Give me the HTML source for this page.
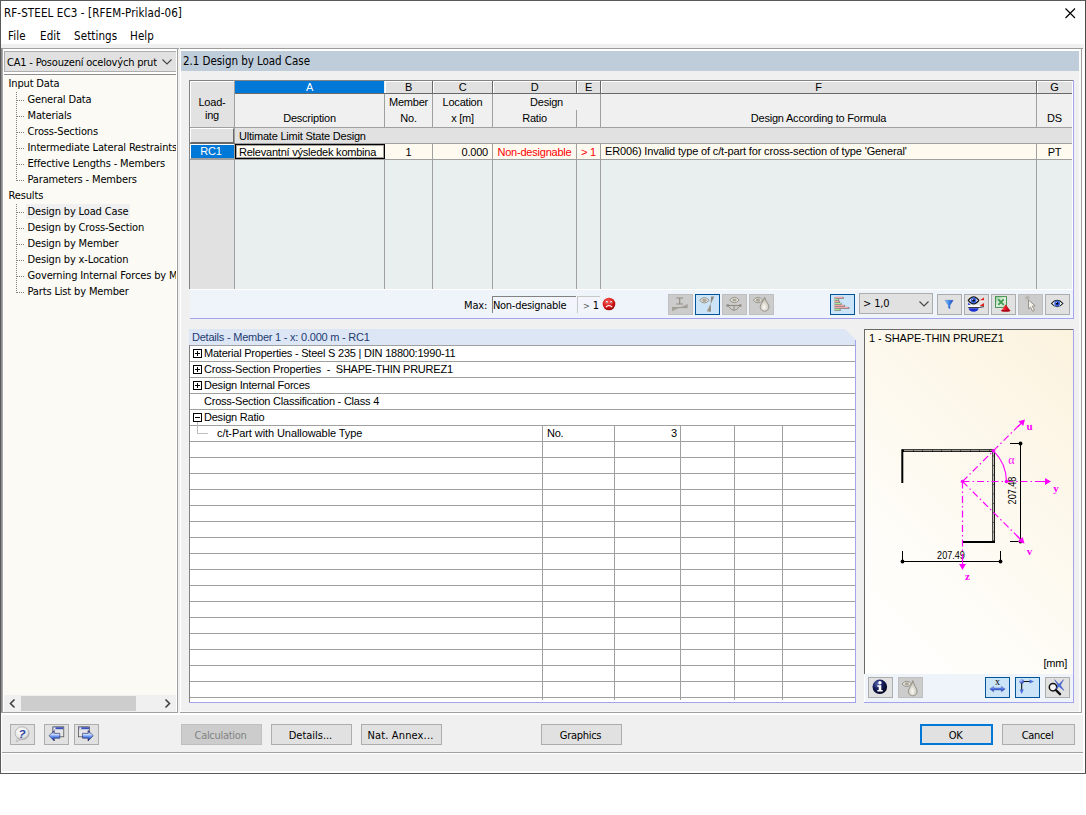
<!DOCTYPE html>
<html><head><meta charset="utf-8"><title>RF-STEEL EC3</title>
<style>
*{box-sizing:border-box;margin:0;padding:0}
html,body{width:1086px;height:815px;overflow:hidden;background:#fff}
body{position:relative;font-family:"Liberation Sans","DejaVu Sans",sans-serif;font-size:11px;color:#000}
.abs,.abs>*{position:absolute}
#win{position:absolute;left:0;top:0;width:1086px;height:774px;background:#f0f0f0;overflow:hidden}
.ui{font-family:"DejaVu Sans Condensed","Liberation Sans",sans-serif;font-size:11.5px;letter-spacing:0.1px;white-space:nowrap}
.tree{font-family:"DejaVu Sans Condensed","Liberation Sans",sans-serif;font-size:11px;letter-spacing:-0.15px}
.th{font-family:"Liberation Sans",sans-serif;font-size:11px;white-space:nowrap;letter-spacing:-0.22px}
.t{position:absolute;white-space:nowrap;line-height:14px}
.c{text-align:center}
.r{text-align:right}
.btn{position:absolute;height:21px;background:#e1e1e1;border:1px solid #adadad;text-align:center;line-height:19px;padding-top:1px;padding-right:2px;white-space:nowrap;letter-spacing:-0.3px}
.ib{position:absolute;width:25px;height:21px;background:#e1e1e1;border:1px solid #adadad}
.ib.on{background:#cce4f7;border-color:#005499}
.ib.dis{background:#cccccc;border-color:#bfbfbf}
.ib svg{position:absolute;left:0;top:0}
</style></head>
<body>
<div id="win">
<!-- titlebar + menu -->
<div class="abs" id="top" style="left:0;top:0;width:1086px;height:44px;background:#fff">
  <div class="t ui" style="left:4px;top:6px">RF-STEEL EC3 - [RFEM-Priklad-06]</div>
  <div class="t ui" style="left:8px;top:29px">File</div>
  <div class="t ui" style="left:40px;top:29px">Edit</div>
  <div class="t ui" style="left:74px;top:29px">Settings</div>
  <div class="t ui" style="left:130px;top:29px">Help</div>
  <svg style="left:1064px;top:7px" width="14" height="14" viewBox="0 0 14 14"><path d="M1.500 1.500L11 11M11 1.500L1.500 11" stroke="#000" stroke-width="1.150" fill="none"/></svg>
</div>
<!-- left panel -->
<div class="abs" id="left" style="left:1px;top:48px;width:178px;height:665px">
  <div style="left:0;top:0;width:178px;height:1px;background:#a0a0a0"></div>
  <div style="left:0;top:0;width:1px;height:665px;background:#8c8c8c"></div>
  <div style="left:1px;top:1px;width:1px;height:664px;background:#a8a8a8"></div>
  <div style="left:2px;top:1px;width:174px;height:663px;background:#fff"></div>
  <div style="left:176px;top:1px;width:1px;height:664px;background:#a0a0a0"></div>
  <div style="left:0;top:664px;width:177px;height:1px;background:#a0a0a0"></div>
  <!-- combo -->
  <div style="left:3px;top:3px;width:172px;height:21px;background:#e1e1e1;border:1px solid #adadad;border-right:none"></div>
  <div class="t tree" style="left:6px;top:8px;width:150px;overflow:hidden;letter-spacing:-0.2px">CA1 - Posouzení ocelových prutů</div>
  <svg style="left:160px;top:10px" width="12" height="8" viewBox="0 0 12 8"><path d="M1.5 1.5L6 6L10.5 1.5" stroke="#444" stroke-width="1.1" fill="none"/></svg>
  <!-- tree -->
  <div id="tree" style="left:3px;top:26px;width:172px;height:638px;background:#fbfaf4;border-top:1px solid #8e8e8e;padding-left:1px;overflow:hidden">
    <div style="position:absolute;left:22px;top:129px;width:104px;height:15px;background:#f0f0f0"></div>
    <div class="t tree" style="left:4.5px;top:2px">Input Data</div>
    <div class="t tree" style="left:23.5px;top:18px">General Data</div>
    <div class="t tree" style="left:23.5px;top:34px">Materials</div>
    <div class="t tree" style="left:23.5px;top:50px">Cross-Sections</div>
    <div class="t tree" style="left:23.5px;top:66px">Intermediate Lateral Restraints</div>
    <div class="t tree" style="left:23.5px;top:82px">Effective Lengths - Members</div>
    <div class="t tree" style="left:23.5px;top:98px">Parameters - Members</div>
    <div class="t tree" style="left:4.5px;top:114px">Results</div>
    <div class="t tree" style="left:23.5px;top:130px">Design by Load Case</div>
    <div class="t tree" style="left:23.5px;top:146px">Design by Cross-Section</div>
    <div class="t tree" style="left:23.5px;top:162px">Design by Member</div>
    <div class="t tree" style="left:23.5px;top:178px">Design by x-Location</div>
    <div class="t tree" style="left:23.5px;top:194px">Governing Internal Forces by Member</div>
    <div class="t tree" style="left:23.5px;top:210px">Parts List by Member</div>
    <!-- dotted connectors -->
    <svg style="position:absolute;left:0;top:0" width="30" height="230" viewBox="0 0 30 230">
      <g stroke="#808080" stroke-width="1" stroke-dasharray="1 1" fill="none" shape-rendering="crispEdges">
        <path d="M12.5 17V105.5"/><path d="M12.5 129V217.5"/>
        <path d="M13 25.5H21"/><path d="M13 41.5H21"/><path d="M13 57.5H21"/><path d="M13 73.5H21"/><path d="M13 89.5H21"/><path d="M13 105.5H21"/>
        <path d="M13 137.5H21"/><path d="M13 153.5H21"/><path d="M13 169.5H21"/><path d="M13 185.5H21"/><path d="M13 201.5H21"/><path d="M13 217.5H21"/>
      </g>
    </svg>
    <!-- scrollbar -->
    <div style="position:absolute;left:0;top:620px;width:172px;height:17px;background:#f0f0f0"></div>
    <div style="position:absolute;left:17px;top:621px;width:115px;height:15px;background:#cdcdcd"></div>
    <svg style="position:absolute;left:0;top:620px" width="172" height="17" viewBox="0 0 172 17"><path d="M10.5 4.5L6.5 8.5L10.5 12.5M161.500 4.5L165.5 8.5L161.5 12.5" stroke="#404040" stroke-width="1.6" fill="none"/></svg>
  </div>
</div>
<!--LEFT_END-->
<!--RIGHT_START--><!-- right panel -->
<div class="abs" id="right" style="left:180px;top:48px;width:905px;height:667px">
<div style="left:0px;top:0px;width:903px;height:1px;background:#9c9c9c"></div>
<div style="left:0px;top:1px;width:901px;height:2px;background:#fff"></div>
<div style="left:0px;top:1px;width:1px;height:664px;background:#fff"></div>
<div style="left:899px;top:3px;width:1px;height:660px;background:#fafafa"></div>
<div style="left:900px;top:1px;width:1px;height:663px;background:#f8f8f8"></div>
<div style="left:901px;top:1px;width:1px;height:664px;background:#a0a0a0"></div>
<div style="left:1px;top:663px;width:900px;height:1px;background:#f8f8f8"></div>
<div style="left:0px;top:664px;width:902px;height:1px;background:#a0a0a0"></div>
<div style="left:1px;top:3px;width:898px;height:20px;background:#bfcddb"></div>
<div class="t ui" style="left:3px;top:6px;letter-spacing:-0.05px">2.1 Design by Load Case</div>
<div style="left:9px;top:32px;width:884px;height:209px;background:#e9efef;border-left:1px solid #828282;border-top:1px solid #828282"></div>
<div style="left:10px;top:33px;width:44px;height:46px;background:#e2e2e2;border-left:1px solid #fff;border-top:1px solid #fff"></div>
<div style="left:10px;top:79px;width:44px;height:162px;background:#e1e1e1"></div>
<div style="left:55px;top:46px;width:838px;height:33px;background:#f0f0f0"></div>
<div style="left:55px;top:33px;width:149px;height:12px;background:#0078d7"></div>
<div style="left:55px;top:45px;width:150px;height:1px;background:#696969"></div>
<div class="t th" style="left:55px;top:32px;width:149px;text-align:center;color:#fff">A</div>
<div style="left:205px;top:33px;width:47px;height:12px;background:#e1e1e1;border-left:1px solid #fff;border-top:1px solid #fff"></div>
<div style="left:205px;top:45px;width:48px;height:1px;background:#696969"></div>
<div style="left:252px;top:33px;width:1px;height:13px;background:#696969"></div>
<div class="t th" style="left:205px;top:32px;width:47px;text-align:center;">B</div>
<div style="left:253px;top:33px;width:59px;height:12px;background:#e1e1e1;border-left:1px solid #fff;border-top:1px solid #fff"></div>
<div style="left:253px;top:45px;width:60px;height:1px;background:#696969"></div>
<div style="left:312px;top:33px;width:1px;height:13px;background:#696969"></div>
<div class="t th" style="left:253px;top:32px;width:59px;text-align:center;">C</div>
<div style="left:313px;top:33px;width:83px;height:12px;background:#e1e1e1;border-left:1px solid #fff;border-top:1px solid #fff"></div>
<div style="left:313px;top:45px;width:84px;height:1px;background:#696969"></div>
<div style="left:396px;top:33px;width:1px;height:13px;background:#696969"></div>
<div class="t th" style="left:313px;top:32px;width:83px;text-align:center;">D</div>
<div style="left:397px;top:33px;width:23px;height:12px;background:#e1e1e1;border-left:1px solid #fff;border-top:1px solid #fff"></div>
<div style="left:397px;top:45px;width:24px;height:1px;background:#696969"></div>
<div style="left:420px;top:33px;width:1px;height:13px;background:#696969"></div>
<div class="t th" style="left:397px;top:32px;width:23px;text-align:center;">E</div>
<div style="left:421px;top:33px;width:435px;height:12px;background:#e1e1e1;border-left:1px solid #fff;border-top:1px solid #fff"></div>
<div style="left:421px;top:45px;width:436px;height:1px;background:#696969"></div>
<div style="left:856px;top:33px;width:1px;height:13px;background:#696969"></div>
<div class="t th" style="left:421px;top:32px;width:435px;text-align:center;">F</div>
<div style="left:857px;top:33px;width:35px;height:12px;background:#e1e1e1;border-left:1px solid #fff;border-top:1px solid #fff"></div>
<div style="left:857px;top:45px;width:36px;height:1px;background:#696969"></div>
<div style="left:892px;top:33px;width:1px;height:13px;background:#696969"></div>
<div class="t th" style="left:857px;top:32px;width:35px;text-align:center;">G</div>
<div style="left:10px;top:79px;width:883px;height:1px;background:#a0a0a0"></div>
<div style="left:54px;top:32px;width:1px;height:209px;background:#a0a0a0"></div>
<div style="left:204px;top:46px;width:1px;height:195px;background:#a0a0a0"></div>
<div style="left:252px;top:46px;width:1px;height:195px;background:#a0a0a0"></div>
<div style="left:312px;top:46px;width:1px;height:195px;background:#a0a0a0"></div>
<div style="left:396px;top:62px;width:1px;height:179px;background:#a0a0a0"></div>
<div style="left:420px;top:46px;width:1px;height:195px;background:#a0a0a0"></div>
<div style="left:856px;top:46px;width:1px;height:195px;background:#a0a0a0"></div>
<div style="left:892px;top:46px;width:1px;height:195px;background:#a0a0a0"></div>
<div style="left:55px;top:80px;width:838px;height:15px;background:#e1e1e1"></div>
<div style="left:10px;top:95px;width:883px;height:1px;background:#a0a0a0"></div>
<div style="left:10px;top:95px;width:45px;height:1px;background:#696969"></div>
<div style="left:10px;top:80px;width:44px;height:15px;background:#e1e1e1;border-left:1px solid #fff;border-top:1px solid #fff;border-bottom:1px solid #696969;border-right:1px solid #696969"></div>
<div style="left:55px;top:96px;width:838px;height:15px;background:#fffaf0"></div>
<div style="left:10px;top:111px;width:883px;height:1px;background:#a0a0a0"></div>
<div style="left:10px;top:96px;width:44px;height:15px;background:#0078d7;border-left:1px solid #fff;border-top:1px solid #fff;border-bottom:1px solid #a0a0a0"></div>
<div style="left:204px;top:96px;width:1px;height:15px;background:#a0a0a0"></div>
<div style="left:252px;top:96px;width:1px;height:15px;background:#a0a0a0"></div>
<div style="left:312px;top:96px;width:1px;height:15px;background:#a0a0a0"></div>
<div style="left:396px;top:96px;width:1px;height:15px;background:#a0a0a0"></div>
<div style="left:420px;top:96px;width:1px;height:15px;background:#a0a0a0"></div>
<div style="left:856px;top:96px;width:1px;height:15px;background:#a0a0a0"></div>
<div style="left:892px;top:96px;width:1px;height:15px;background:#a0a0a0"></div>
<div style="left:55px;top:96px;width:150px;height:15px;border:1px solid #000;background:#fffcf4;box-shadow:inset 0 0 0 1px rgba(0,0,0,0.35)"></div>
<div class="t th" style="left:10px;top:48px;width:44px;text-align:center;line-height:13px">Load-<br>ing</div>
<div class="t th" style="left:55px;top:63px;width:149px;text-align:center;">Description</div>
<div class="t th" style="left:205px;top:46px;width:47px;text-align:center;line-height:16px">Member<br>No.</div>
<div class="t th" style="left:253px;top:46px;width:59px;text-align:center;line-height:16px">Location<br>x [m]</div>
<div class="t th" style="left:313px;top:47px;width:107px;text-align:center;">Design</div>
<div class="t th" style="left:313px;top:63px;width:83px;text-align:center;">Ratio</div>
<div class="t th" style="left:421px;top:63px;width:435px;text-align:center;">Design According to Formula</div>
<div class="t th" style="left:857px;top:63px;width:35px;text-align:center;">DS</div>
<div class="t th" style="left:59px;top:81px;">Ultimate Limit State Design</div>
<div class="t th" style="left:9px;top:96px;width:44px;text-align:center;color:#fff">RC1</div>
<div class="t th" style="left:59px;top:97px;width:143px;overflow:hidden">Relevantní výsledek kombina</div>
<div class="t th" style="left:205px;top:97px;width:47px;text-align:center;">1</div>
<div class="t th" style="left:253px;top:97px;width:55px;text-align:right;">0.000</div>
<div class="t th" style="left:313px;top:97px;width:83px;text-align:center;color:#f00">Non-designable</div>
<div class="t th" style="left:397px;top:97px;width:23px;text-align:center;color:#f00">&gt; 1</div>
<div class="t th" style="left:425px;top:96px;letter-spacing:-0.15px">ER006) Invalid type of c/t-part for cross-section of type 'General'</div>
<div class="t th" style="left:857px;top:97px;width:35px;text-align:center;">PT</div>
<div style="left:892px;top:33px;width:1px;height:208px;background:#fff"></div>
<div style="left:893px;top:32px;width:1px;height:239px;background:#a3a3ee"></div>
<div style="left:10px;top:241px;width:883px;height:29px;background:#eff3fa;border-top:1px solid #fff"></div>
<div style="left:10px;top:270px;width:884px;height:1px;background:#a3a3ee"></div>
<div class="t tree" style="left:284px;top:251px;">Max:</div>
<div style="left:312px;top:248px;width:84px;height:17px;background:#f2f5fb;border-top:1px solid #828282;border-left:1px solid #828282"></div>
<div class="t tree" style="left:313px;top:251px;letter-spacing:-0.29px">Non-designable</div>
<div style="left:397px;top:248px;width:23px;height:17px;background:#f2f5fb;border-top:1px solid #c8c8c8;border-left:1px solid #c8c8c8"></div>
<div class="t tree" style="left:403px;top:251px;"><span style="font-size:9px;color:#555">&gt;</span> 1</div>
<svg style="left:422px;top:249px" width="14" height="14" viewBox="0 0 14 14"><defs><radialGradient id="sm" cx="0.4" cy="0.3" r="0.8"><stop offset="0" stop-color="#ff5a5a"/><stop offset="0.6" stop-color="#d21414"/><stop offset="1" stop-color="#7a0000"/></radialGradient></defs><circle cx="7" cy="7" r="6.3" fill="url(#sm)"/><circle cx="4.8" cy="5.2" r="1.1" fill="#fff"/><circle cx="9.2" cy="5.2" r="1.1" fill="#fff"/><circle cx="4.9" cy="5.4" r="0.5" fill="#300"/><circle cx="9.1" cy="5.4" r="0.5" fill="#300"/><path d="M3.8 10.2Q7 6.8 10.2 10.2" stroke="#fff" stroke-width="1.2" fill="none"/></svg>
<div class="ib dis" style="left:488px;top:246px"><svg style="left:-1px;top:-1px" width="25" height="21" viewBox="0 0 25 21"><path d="M8.300 4H15M8.300 10H15M11.700 4V10" stroke="#8f8b80" stroke-width="1.1" fill="none"/><path d="M4 13.600H19.700" stroke="#8f8b80" stroke-width="0.9"/><path d="M12 13.600L19.700 10V13.600Z" fill="#a5a298"/><path d="M4 13.600V17.200L12 13.600Z" fill="#a5a298"/></svg></div>
<div class="ib on" style="left:515px;top:246px"><svg style="left:-1px;top:-1px" width="25" height="21" viewBox="0 0 25 21"><path d="M4.6000000000000005 6.3Q9.4 0.9800000000000004 14.2 6.3Q9.4 11.62 4.6000000000000005 6.3Z" fill="#e8e6dc" stroke="#8f8b80" stroke-width="0.9"/><ellipse cx="9.4" cy="6.3" rx="2.2" ry="1.6" fill="#a9a69c"/><path d="M16 2.600H19.300L15.700 10.200Z" fill="#8f8b80"/><path d="M15.500 9.800L15.900 17.400H11.600Z" fill="#a19d92"/><path d="M15.500 9.800L15.900 17.400H14Z" fill="#8f8b80"/></svg></div>
<div class="ib dis" style="left:542px;top:246px"><svg style="left:-1px;top:-1px" width="25" height="21" viewBox="0 0 25 21"><path d="M7.6000000000000005 6.0Q12.4 0.6800000000000006 17.2 6.0Q12.4 11.32 7.6000000000000005 6.0Z" fill="#e8e6dc" stroke="#8f8b80" stroke-width="0.9"/><ellipse cx="12.4" cy="6.0" rx="2.2" ry="1.6" fill="#a9a69c"/><path d="M5.500 11.500H18.500" stroke="#8f8b80" stroke-width="1.1"/><rect x="4.500" y="10.300" width="2.400" height="2.400" fill="#8f8b80"/><rect x="17.100" y="10.300" width="2.400" height="2.400" fill="#8f8b80"/><path d="M6.500 12.300Q12 20.500 17.500 12.300M12 11.500V16.200" stroke="#8f8b80" stroke-width="0.9" fill="none"/></svg></div>
<div class="ib dis" style="left:569px;top:246px"><svg style="left:-1px;top:-1px" width="25" height="21" viewBox="0 0 25 21"><defs><radialGradient id="dg" cx="0.45" cy="0.7" r="0.6"><stop offset="0" stop-color="#fbfbf6"/><stop offset="1" stop-color="#bcb9ae"/></radialGradient></defs><path d="M4.2 6.2Q9 0.8800000000000008 13.8 6.2Q9 11.52 4.2 6.2Z" fill="#e8e6dc" stroke="#8f8b80" stroke-width="0.9"/><ellipse cx="9" cy="6.2" rx="2.2" ry="1.6" fill="#a9a69c"/><path d="M15.6 3.2C16.6 7.2 20.0 10.299999999999999 20.0 12.799999999999999A4.4 4.4 0 1 1 11.2 12.799999999999999C11.2 10.299999999999999 14.6 7.2 15.6 3.2Z" fill="url(#dg)" stroke="#8f8b80" stroke-width="0.9"/></svg></div>
<div class="ib on" style="left:650px;top:246px"><svg style="left:-1px;top:-1px" width="25" height="21" viewBox="0 0 25 21"><rect x="4.600" y="2.9" width="9.1" height="2" fill="#7e7e7e"/><rect x="4.600" y="2.9" width="8.2" height="1.300" fill="#f4a6a6"/><rect x="4.600" y="4.9" width="4.5" height="2" fill="#7e7e7e"/><rect x="4.600" y="4.9" width="3.6" height="1.300" fill="#a6ec96"/><rect x="4.600" y="6.9" width="5.5" height="2" fill="#7e7e7e"/><rect x="4.600" y="6.9" width="4.6" height="1.300" fill="#f4a6a6"/><rect x="4.600" y="8.9" width="7.1" height="2" fill="#7e7e7e"/><rect x="4.600" y="8.9" width="6.2" height="1.300" fill="#a6ec96"/><rect x="4.600" y="10.9" width="10.3" height="2" fill="#7e7e7e"/><rect x="4.600" y="10.9" width="9.4" height="1.300" fill="#f4a6a6"/><rect x="4.600" y="12.9" width="14.7" height="2" fill="#7e7e7e"/><rect x="4.600" y="12.9" width="13.8" height="1.300" fill="#f4a6a6"/><rect x="4.600" y="14.9" width="6.1" height="2" fill="#7e7e7e"/><rect x="4.600" y="14.9" width="5.2" height="1.300" fill="#a6ec96"/></svg></div>
<div style="left:679px;top:245px;width:74px;height:21px;background:#e1e1e1;border:1px solid #adadad"></div>
<div class="t tree" style="left:683px;top:249px;">&gt; 1,0</div>
<svg style="left:738px;top:252px" width="12" height="8" viewBox="0 0 12 8"><path d="M1.5 1.5L6 6L10.5 1.5" stroke="#444" stroke-width="1.1" fill="none"/></svg>
<div class="ib " style="left:757px;top:246px"><svg style="left:-1px;top:-1px" width="25" height="21" viewBox="0 0 25 21"><defs><linearGradient id="fg" x1="0" y1="0" x2="1" y2="0"><stop offset="0" stop-color="#a8dcff"/><stop offset="0.45" stop-color="#3a8cf0"/><stop offset="1" stop-color="#1a3fb0"/></linearGradient></defs><path d="M8 6.300H16.200L13 11.300V14.800L11.400 13.800V11.300Z" fill="url(#fg)" stroke="#2a55b8" stroke-width="0.400"/></svg></div>
<div class="ib " style="left:784px;top:246px"><svg style="left:-1px;top:-1px" width="25" height="21" viewBox="0 0 25 21"><path d="M4.3 6.4Q9.6 -0.6299999999999999 14.899999999999999 6.4Q9.6 13.43 4.3 6.4Z" fill="#fff" stroke="#111" stroke-width="1.1"/><circle cx="9.6" cy="6.4" r="2.9" fill="#3a62e0"/><circle cx="9.6" cy="6.4" r="1.2" fill="#000"/><circle cx="8.7" cy="5.4" r="0.6" fill="#cfe0ff"/><path d="M15.400 6.400L20 3.400V6.400Z" fill="#e02020"/><path d="M15.400 7H20" stroke="#fff" stroke-width="0.900"/><path d="M15.400 12L20 9.100V12Z" fill="#e02020"/><path d="M4.200 8.600L6.500 11H4.200Z" fill="#2038d8"/><rect x="4.200" y="11.300" width="11.500" height="1.800" fill="#fff"/><path d="M4.200 13.500H15.500L20 12.600" stroke="#222" stroke-width="0.900" fill="none"/><path d="M4.600 14.300H14.600A5 3.500 0 0 1 4.600 14.300Z" fill="#1c30d0"/></svg></div>
<div class="ib " style="left:811px;top:246px"><svg style="left:-1px;top:-1px" width="25" height="21" viewBox="0 0 25 21"><defs><linearGradient id="rg" x1="0" y1="0" x2="1" y2="0"><stop offset="0" stop-color="#ff6a6a"/><stop offset="0.5" stop-color="#e81424"/><stop offset="1" stop-color="#a00010"/></linearGradient><linearGradient id="xg" x1="0" y1="0" x2="1" y2="1"><stop offset="0" stop-color="#8fc89a"/><stop offset="0.5" stop-color="#e4f2e4"/><stop offset="1" stop-color="#c4e0c8"/></linearGradient></defs><rect x="4.500" y="2.600" width="11" height="10.800" fill="url(#xg)" stroke="#3a8a44" stroke-width="0.900"/><path d="M7.300 5.300L12.700 10.800M12.700 5.300L7.300 10.800" stroke="#2f9440" stroke-width="1.900" opacity="0.900"/><path d="M14.700 10.500L19.300 16.800H10.100Z" fill="url(#rg)"/><ellipse cx="14.700" cy="16.700" rx="4.600" ry="1" fill="#b00014"/></svg></div>
<div class="ib dis" style="left:838px;top:246px"><svg style="left:-1px;top:-1px" width="25" height="21" viewBox="0 0 25 21"><path d="M10.500 6L17.200 11.800L14.300 12.200L16.600 16.400L14.600 17.300L12.600 13.200L10.600 15Z" fill="#f4f2ec" stroke="#8f8b80" stroke-width="0.900"/><path d="M6.800 3.800H12M9.400 1.400V6.200M7.500 2L11.300 5.600M11.300 2L7.500 5.600" stroke="#aeaba1" stroke-width="0.700"/></svg></div>
<div class="ib " style="left:865px;top:246px"><svg style="left:-1px;top:-1px" width="25" height="21" viewBox="0 0 25 21"><path d="M6.499999999999999 9.5Q12.2 3.04 17.9 9.5Q12.2 15.96 6.499999999999999 9.5Z" fill="#fff" stroke="#111" stroke-width="1.1"/><circle cx="12.2" cy="9.5" r="2.9" fill="#3a62e0"/><circle cx="12.2" cy="9.5" r="1.2" fill="#000"/><circle cx="11.299999999999999" cy="8.5" r="0.6" fill="#cfe0ff"/></svg></div>
<div style="left:9px;top:297px;width:667px;height:358px;background:#fff"></div>
<div style="left:9px;top:281px;width:667px;height:16px;background:#dce6f4;clip-path:polygon(0 0,656px 0,667px 11px,667px 16px,0 16px)"></div>
<div class="t th" style="left:12px;top:282px;color:#1f3b73">Details - Member 1 - x: 0.000 m - RC1</div>
<div style="left:9px;top:297px;width:1px;height:357px;background:#828282"></div>
<div style="left:675px;top:292px;width:1px;height:363px;background:#a3a3ee"></div>
<div style="left:9px;top:654px;width:667px;height:1px;background:#a3a3ee"></div>
<div style="left:10px;top:297px;width:665px;height:1px;background:#a0a0a0"></div>
<div style="left:10px;top:313px;width:665px;height:1px;background:#a0a0a0"></div>
<div style="left:10px;top:329px;width:665px;height:1px;background:#a0a0a0"></div>
<div style="left:10px;top:345px;width:665px;height:1px;background:#a0a0a0"></div>
<div style="left:10px;top:361px;width:665px;height:1px;background:#a0a0a0"></div>
<div style="left:10px;top:377px;width:665px;height:1px;background:#a0a0a0"></div>
<div style="left:10px;top:393px;width:665px;height:1px;background:#a0a0a0"></div>
<div style="left:10px;top:409px;width:665px;height:1px;background:#a0a0a0"></div>
<div style="left:10px;top:425px;width:665px;height:1px;background:#a0a0a0"></div>
<div style="left:10px;top:441px;width:665px;height:1px;background:#a0a0a0"></div>
<div style="left:10px;top:457px;width:665px;height:1px;background:#a0a0a0"></div>
<div style="left:10px;top:473px;width:665px;height:1px;background:#a0a0a0"></div>
<div style="left:10px;top:489px;width:665px;height:1px;background:#a0a0a0"></div>
<div style="left:10px;top:505px;width:665px;height:1px;background:#a0a0a0"></div>
<div style="left:10px;top:521px;width:665px;height:1px;background:#a0a0a0"></div>
<div style="left:10px;top:537px;width:665px;height:1px;background:#a0a0a0"></div>
<div style="left:10px;top:553px;width:665px;height:1px;background:#a0a0a0"></div>
<div style="left:10px;top:569px;width:665px;height:1px;background:#a0a0a0"></div>
<div style="left:10px;top:585px;width:665px;height:1px;background:#a0a0a0"></div>
<div style="left:10px;top:601px;width:665px;height:1px;background:#a0a0a0"></div>
<div style="left:10px;top:617px;width:665px;height:1px;background:#a0a0a0"></div>
<div style="left:10px;top:633px;width:665px;height:1px;background:#a0a0a0"></div>
<div style="left:10px;top:649px;width:665px;height:1px;background:#a0a0a0"></div>
<div style="left:362px;top:377px;width:1px;height:275px;background:#a0a0a0"></div>
<div style="left:434px;top:377px;width:1px;height:275px;background:#a0a0a0"></div>
<div style="left:500px;top:377px;width:1px;height:275px;background:#a0a0a0"></div>
<div style="left:554px;top:377px;width:1px;height:275px;background:#a0a0a0"></div>
<div style="left:602px;top:377px;width:1px;height:275px;background:#a0a0a0"></div>
<svg style="left:13px;top:301px" width="9" height="9" viewBox="0 0 9 9" shape-rendering="crispEdges"><rect x="0.5" y="0.5" width="8" height="8" fill="#fff" stroke="#000"/><path d="M2 4.5H7M4.5 2V7" stroke="#000" fill="none"/></svg>
<svg style="left:13px;top:317px" width="9" height="9" viewBox="0 0 9 9" shape-rendering="crispEdges"><rect x="0.5" y="0.5" width="8" height="8" fill="#fff" stroke="#000"/><path d="M2 4.5H7M4.5 2V7" stroke="#000" fill="none"/></svg>
<svg style="left:13px;top:333px" width="9" height="9" viewBox="0 0 9 9" shape-rendering="crispEdges"><rect x="0.5" y="0.5" width="8" height="8" fill="#fff" stroke="#000"/><path d="M2 4.5H7M4.5 2V7" stroke="#000" fill="none"/></svg>
<svg style="left:13px;top:365px" width="9" height="9" viewBox="0 0 9 9" shape-rendering="crispEdges"><rect x="0.5" y="0.5" width="8" height="8" fill="#fff" stroke="#000"/><path d="M2 4.5H7" stroke="#000" fill="none"/></svg>
<div class="t th" style="left:24px;top:298px;">Material Properties - Steel S 235 | DIN 18800:1990-11</div>
<div class="t th" style="left:24px;top:314px;">Cross-Section Properties &nbsp;- &nbsp;SHAPE-THIN PRUREZ1</div>
<div class="t th" style="left:24px;top:330px;">Design Internal Forces</div>
<div class="t th" style="left:24px;top:346px;">Cross-Section Classification - Class 4</div>
<div class="t th" style="left:24px;top:362px;">Design Ratio</div>
<div class="t th" style="left:37px;top:378px;letter-spacing:-0.08px">c/t-Part with Unallowable Type</div>
<div class="t th" style="left:367px;top:378px;">No.</div>
<div class="t th" style="left:436px;top:378px;width:61px;text-align:right;">3</div>
<div style="left:17px;top:374px;width:1px;height:12px;background:#c0c0c0"></div>
<div style="left:17px;top:385px;width:11px;height:1px;background:#c0c0c0"></div>
<div style="left:684px;top:281px;width:210px;height:374px;background:linear-gradient(225deg,#fcf3de 0%,#fdf8ec 35%,#fefdf9 70%,#ffffff 100%)"></div>
<div style="left:684px;top:281px;width:209px;height:1px;background:#696969"></div>
<div style="left:684px;top:281px;width:1px;height:345px;background:#696969"></div>
<div style="left:893px;top:281px;width:1px;height:374px;background:#a3a3ee"></div>
<div style="left:684px;top:654px;width:210px;height:1px;background:#a3a3ee"></div>
<div style="left:685px;top:626px;width:208px;height:28px;background:#eff3fa"></div>
<div class="t th" style="left:689px;top:283px;letter-spacing:-0.1px">1 - SHAPE-THIN PRUREZ1</div>
<div class="t th" style="left:849px;top:608px;width:38px;text-align:right;">[mm]</div>
<div class="ib " style="left:688px;top:629px"><svg style="left:-1px;top:-1px" width="25" height="21" viewBox="0 0 25 21"><defs><radialGradient id="ig" cx="0.35" cy="0.3" r="0.8"><stop offset="0" stop-color="#5a6ab0"/><stop offset="0.45" stop-color="#141c5a"/><stop offset="1" stop-color="#000010"/></radialGradient></defs><circle cx="11.800" cy="9.800" r="7.300" fill="url(#ig)"/><circle cx="11.900" cy="5.700" r="1.700" fill="#fff"/><path d="M9.300 8.200H13.300V13H14.700V14.600H9.300V13H10.700V9.800H9.300Z" fill="#fff"/></svg></div>
<div class="ib dis" style="left:718px;top:629px"><svg style="left:-1px;top:-1px" width="25" height="21" viewBox="0 0 25 21"><defs><radialGradient id="dg" cx="0.45" cy="0.7" r="0.6"><stop offset="0" stop-color="#fbfbf6"/><stop offset="1" stop-color="#bcb9ae"/></radialGradient></defs><path d="M4.000000000000001 6.9Q8.8 1.580000000000001 13.600000000000001 6.9Q8.8 12.219999999999999 4.000000000000001 6.9Z" fill="#e8e6dc" stroke="#8f8b80" stroke-width="0.9"/><ellipse cx="8.8" cy="6.9" rx="2.2" ry="1.6" fill="#a9a69c"/><path d="M14.8 3.6C15.8 7.6 19.200000000000003 11.9 19.200000000000003 14.4A4.4 4.4 0 1 1 10.4 14.4C10.4 11.9 13.8 7.6 14.8 3.6Z" fill="url(#dg)" stroke="#8f8b80" stroke-width="0.9"/></svg></div>
<div class="ib on" style="left:805px;top:629px"><svg style="left:-1px;top:-1px" width="25" height="21" viewBox="0 0 25 21"><defs><linearGradient id="ag" x1="0" y1="0" x2="0" y2="1"><stop offset="0" stop-color="#b8ccff"/><stop offset="0.5" stop-color="#4a6fe0"/><stop offset="1" stop-color="#1c2f90"/></linearGradient></defs><text x="12.400" y="8.300" font-family="Liberation Serif,serif" font-size="10" text-anchor="middle" fill="#000">x</text><path d="M4.800 12L8.600 9.300V11H16.400V9.300L20.200 12L16.400 14.700V13H8.600V14.700Z" fill="url(#ag)" stroke="#2a4aa8" stroke-width="0.4"/></svg></div>
<div class="ib on" style="left:835px;top:629px"><svg style="left:-1px;top:-1px" width="25" height="21" viewBox="0 0 25 21"><defs><radialGradient id="bg4" cx="0.35" cy="0.3" r="0.8"><stop offset="0" stop-color="#c8d6ff"/><stop offset="0.6" stop-color="#4a66d8"/><stop offset="1" stop-color="#1c2f90"/></radialGradient></defs><path d="M6.700 4.500H15.500M6.700 4.500V13.500" stroke="#111" stroke-width="1.100" fill="none"/><path d="M14.500 2.400L19 4.500L14.500 6.600Z" fill="#4a6fe0"/><path d="M4.600 12.500L6.700 17L8.800 12.500Z" fill="#4a6fe0"/><circle cx="6.700" cy="4.400" r="2.200" fill="url(#bg4)"/></svg></div>
<div class="ib " style="left:865px;top:629px"><svg style="left:-1px;top:-1px" width="25" height="21" viewBox="0 0 25 21"><circle cx="8" cy="10.200" r="3.700" fill="#f4f4f4" stroke="#111" stroke-width="1.500"/><path d="M10.800 13L15 17.200" stroke="#111" stroke-width="2.400" stroke-linecap="round"/><path d="M9.500 2.600L14 7.200L18.600 2.600L15.500 8.200L19 13.500L14 9.500L10.800 12.500L12.800 8Z" fill="#4a6fe0" stroke="#2a3fa8" stroke-width="0.400"/></svg></div>
<svg style="left:685px;top:282px" width="208" height="344" viewBox="865 330 208 344">
<g fill="none" stroke="#000" stroke-linecap="butt">
<path d="M902.3 483V449.300" stroke-width="2"/>
<path d="M902 450.600H993.600V543" stroke-width="2.600"/>
<path d="M962 542H994.900" stroke-width="2"/>
<path d="M904 450.700H993.500V540.500" stroke="#f3eee2" stroke-width="0.800" stroke-dasharray="9 0.500"/>
</g>
<g stroke="#000" stroke-width="1" fill="none" shape-rendering="crispEdges"><path d="M1020.5 443.500V541.500M1010 443.500H1020.5M1010 541.500H1020.5"/><path d="M902.500 561.500H1000.500M902.500 551V561.500M1000.500 551V561.500"/></g>
<circle cx="1020.5" cy="443.5" r="1.9" fill="#000"/>
<circle cx="1020.5" cy="541.5" r="1.9" fill="#000"/>
<circle cx="902.5" cy="561.5" r="1.9" fill="#000"/>
<circle cx="1000.5" cy="561.5" r="1.9" fill="#000"/>
<text x="951" y="559" font-family="Liberation Sans,sans-serif" font-size="10.300" textLength="27.800" lengthAdjust="spacingAndGlyphs" text-anchor="middle" fill="#000">207.49</text>
<text transform="translate(1015.800 490.500) rotate(-90)" font-family="Liberation Sans,sans-serif" font-size="10.300" textLength="27.800" lengthAdjust="spacingAndGlyphs" text-anchor="middle" fill="#000">207.48</text>
<g stroke="#ff00ff" stroke-width="1.2" fill="none" stroke-dasharray="7 3 1.5 3">
<path d="M962.5 481.5H1045"/>
<path d="M962.5 481.5V564"/>
<path d="M962.5 481.5L1020.5 423.800"/>
<path d="M962.5 481.5L1020 538.800"/>
</g>
<path d="M1041 481.500H1046M962.500 560V565M1017.500 427L1021 423.500M1017 536L1020.500 539.500" stroke="#ff00ff" stroke-width="1.100" fill="none"/>
<polygon points="1051.0,481.5 1045.0,484.9 1045.0,478.1" fill="#ff00ff"/>
<polygon points="962.5,570.0 959.1,564.0 965.9,564.0" fill="#ff00ff"/>
<polygon points="1025.0,419.5 1023.2,426.1 1018.4,421.3" fill="#ff00ff"/>
<polygon points="1024.5,543.5 1017.9,541.7 1022.7,536.9" fill="#ff00ff"/>
<path d="M993.500 450.800A44 44 0 0 1 1006.500 481.500" stroke="#ff00ff" stroke-width="1.100" fill="none"/>
<circle cx="962.5" cy="481.5" r="1.8" fill="#ff00ff"/>
<circle cx="993.5" cy="450.8" r="1.8" fill="#ff00ff"/>
<circle cx="1006.5" cy="481.5" r="1.8" fill="#ff00ff"/>
<text x="1029.500" y="430" font-family="Liberation Serif,serif" font-weight="bold" font-size="11" text-anchor="middle" fill="#ff00ff">u</text>
<text x="1056" y="492" font-family="Liberation Serif,serif" font-weight="bold" font-size="11" text-anchor="middle" fill="#ff00ff">y</text>
<text x="1029.500" y="554.500" font-family="Liberation Serif,serif" font-weight="bold" font-size="11" text-anchor="middle" fill="#ff00ff">v</text>
<text x="967.500" y="580" font-family="Liberation Serif,serif" font-weight="bold" font-size="11" text-anchor="middle" fill="#ff00ff">z</text>
<text x="1011.500" y="464" font-family="Liberation Serif,DejaVu Serif,serif" font-size="12" text-anchor="middle" fill="#ff00ff">α</text>
</svg>
</div><!--RIGHT_END-->
<!--BOTTOM_START--><!-- bottom -->
<div class="abs" id="bottom" style="left:0;top:713px;width:1086px;height:61px">
<div class="ib " style="left:10px;top:11px"><svg style="left:-1px;top:-1px" width="25" height="21" viewBox="0 0 25 21"><defs><radialGradient id="hb" cx="0.4" cy="0.35" r="0.7"><stop offset="0" stop-color="#ffffff"/><stop offset="0.7" stop-color="#e4e4e4"/><stop offset="1" stop-color="#a8a8a8"/></radialGradient></defs><path d="M7.500 14.500L6.300 17.600L10.500 15.800Z" fill="#e8e8e8" stroke="#999" stroke-width="0.500"/><ellipse cx="12.100" cy="9.200" rx="7" ry="6.400" fill="url(#hb)" stroke="#9a9a9a" stroke-width="0.600"/><text x="12.100" y="13.600" font-family="Liberation Sans,sans-serif" font-weight="bold" font-style="italic" font-size="11.500" text-anchor="middle" fill="#2a3fa0">?</text></svg></div>
<div class="ib " style="left:44px;top:11px"><svg style="left:-1px;top:-1px" width="25" height="21" viewBox="0 0 25 21"><defs><linearGradient id="ag2" x1="0" y1="0" x2="0" y2="1"><stop offset="0" stop-color="#1c2f90"/><stop offset="0.35" stop-color="#d0e0ff"/><stop offset="0.6" stop-color="#5a8af0"/><stop offset="1" stop-color="#101860"/></linearGradient></defs><rect x="8.800" y="2.800" width="11" height="10" fill="#e6e6e6" stroke="#444" stroke-width="0.700"/><rect x="9.300" y="3.200" width="10" height="2" fill="#3a52c0"/><rect x="9.500" y="3.500" width="2" height="1.400" fill="#fff"/><path d="M5 11.700L10.300 6.500V9.300H15.800V14.200H10.300V17Z" fill="url(#ag2)" stroke="#0c1450" stroke-width="0.500"/></svg></div>
<div class="ib " style="left:74px;top:11px"><svg style="left:-1px;top:-1px" width="25" height="21" viewBox="0 0 25 21"><defs><linearGradient id="ag2" x1="0" y1="0" x2="0" y2="1"><stop offset="0" stop-color="#1c2f90"/><stop offset="0.35" stop-color="#d0e0ff"/><stop offset="0.6" stop-color="#5a8af0"/><stop offset="1" stop-color="#101860"/></linearGradient></defs><rect x="4.600" y="2.800" width="11" height="10" fill="#e6e6e6" stroke="#444" stroke-width="0.700"/><rect x="5.100" y="3.200" width="10" height="2" fill="#3a52c0"/><rect x="5.300" y="3.500" width="2" height="1.400" fill="#fff"/><path d="M19.300 11.700L14 6.500V9.300H8.500V14.200H14V17Z" fill="url(#ag2)" stroke="#0c1450" stroke-width="0.500"/></svg></div>
<div class="btn tree" style="left:181px;top:11px;width:81px;background:#cccccc;border-color:#bfbfbf;color:#838383">Calculation</div>
<div class="btn tree" style="left:271px;top:11px;width:81px;letter-spacing:-0.03px">Details...</div>
<div class="btn tree" style="left:361px;top:11px;width:81px;letter-spacing:0.14px">Nat. Annex...</div>
<div class="btn tree" style="left:541px;top:11px;width:81px;">Graphics</div>
<div class="btn tree" style="left:920px;top:11px;width:73px;border:2px solid #0078d7;line-height:17px">OK</div>
<div class="btn tree" style="left:1002px;top:11px;width:73px;">Cancel</div>
<div style="left:1px;top:39px;width:1083px;height:1px;background:#a0a0a0"></div>
<div style="left:1px;top:40px;width:1083px;height:1px;background:#fff"></div>
<div style="left:1px;top:58px;width:1084px;height:2px;background:#fff"></div>
</div><!--BOTTOM_END-->
<!-- window edges -->
<div style="position:absolute;left:1082px;top:49px;width:3px;height:666px;background:#fff"></div>
<div style="position:absolute;left:1083px;top:715px;width:2px;height:58px;background:#fff"></div>
<div style="position:absolute;left:1084px;top:44px;width:1px;height:5px;background:#fff"></div>
<div style="position:absolute;left:1px;top:713px;width:1084px;height:2px;background:#fff"></div>
<div style="position:absolute;left:1px;top:715px;width:1px;height:56px;background:#fff"></div>
<div style="position:absolute;left:0;top:0;width:1px;height:774px;background:#5a5a5a"></div>
<div style="position:absolute;left:0;top:0;width:1086px;height:1px;background:#5a5a5a"></div>
<div style="position:absolute;left:1085px;top:0;width:1px;height:774px;background:#4a4a4a"></div>
<div style="position:absolute;left:0;top:773px;width:1086px;height:1px;background:#5a5a5a"></div>
</div>
</body></html>
